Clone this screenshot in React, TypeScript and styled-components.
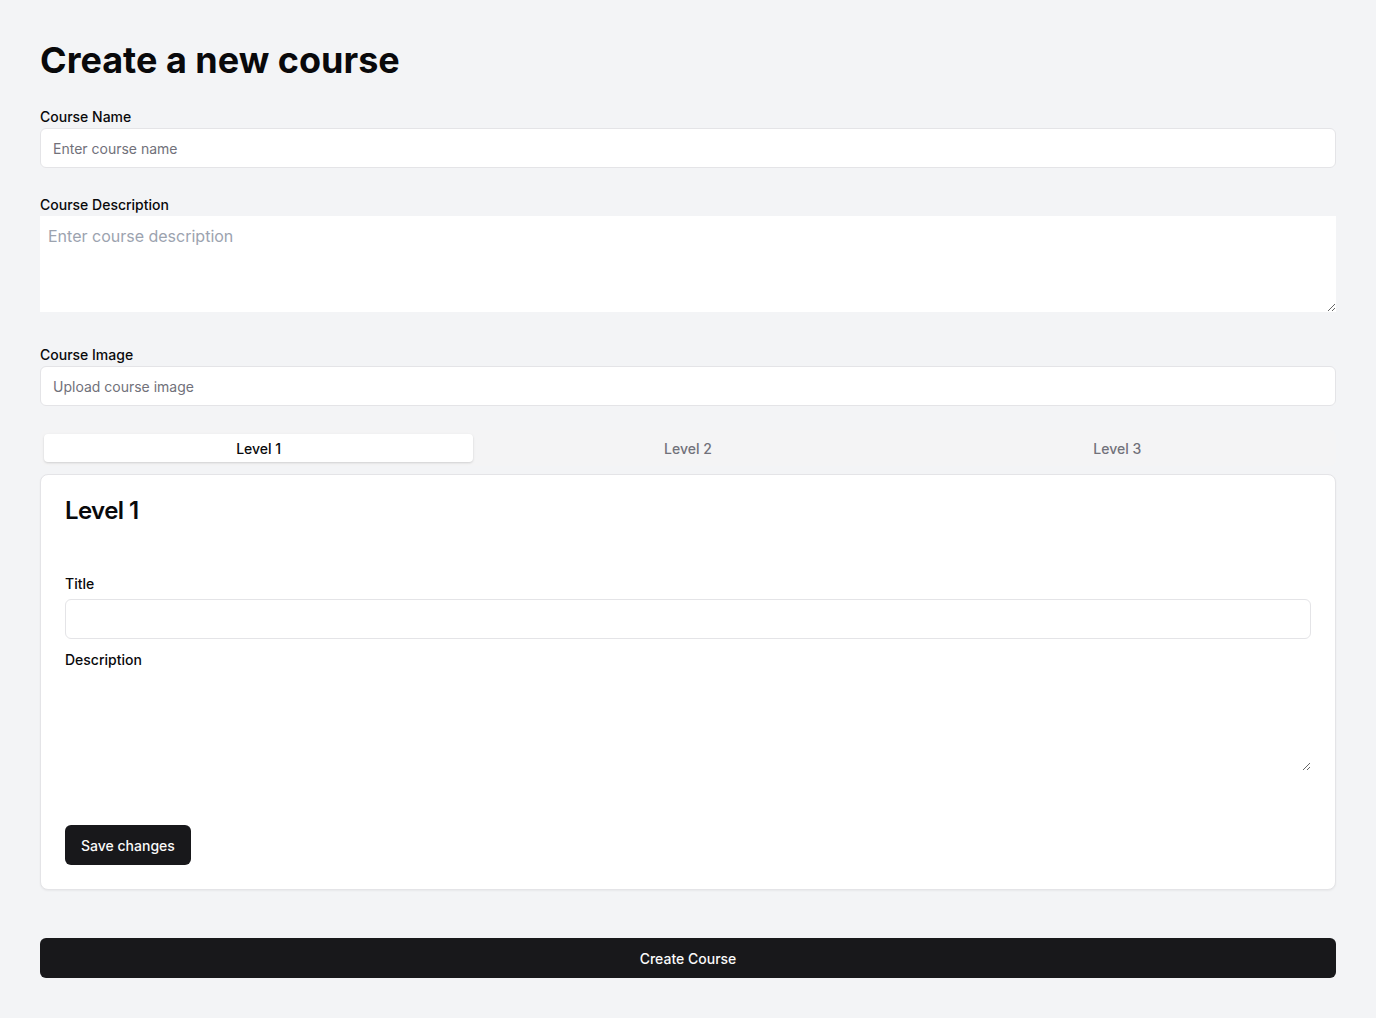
import { useState } from 'react';
import styled, { createGlobalStyle } from 'styled-components';

const levels = ['Level 1', 'Level 2', 'Level 3'];

export default function App() {
  const [active, setActive] = useState(0);

  return (
    <>
      <GlobalStyle />
      <Page>
        <Heading>Create a new course</Heading>

        <Field>
          <Label>Course Name</Label>
          <Input placeholder="Enter course name" />
        </Field>

        <Field>
          <Label>Course Description</Label>
          <PlainArea placeholder="Enter course description" />
        </Field>

        <Field>
          <Label>Course Image</Label>
          <Input placeholder="Upload course image" />
        </Field>

        <TabsList>
          {levels.map((l, i) => (
            <Tab key={l} $active={i === active} onClick={() => setActive(i)}>
              {l}
            </Tab>
          ))}
        </TabsList>

        <Card>
          <CardTitle>{levels[active]}</CardTitle>
          <CardBody>
            <Label $inCard>Title</Label>
            <Input />
            <Label $inCard $spaced>Description</Label>
            <PlainArea />
            <Button>Save changes</Button>
          </CardBody>
        </Card>

        <WideButton>Create Course</WideButton>
      </Page>
    </>
  );
}

const GlobalStyle = createGlobalStyle`
  * { box-sizing: border-box; }
  body {
    margin: 0;
    background: #f3f4f6;
    color: #09090b;
    font-family: Inter, "Noto Sans", sans-serif;
  }
`;

const Page = styled.main`
  padding: 40px;
  display: flex;
  flex-direction: column;
`;

const Heading = styled.h1`
  font-size: 36px;
  line-height: 40px;
  font-weight: 700;
  margin: 0 0 27px;
`;

const Field = styled.div`
  display: flex;
  flex-direction: column;
  margin-bottom: 27px;
`;

const Label = styled.label<{ $spaced?: boolean; $inCard?: boolean }>`
  display: block;
  font-size: 14px;
  line-height: 20px;
  font-weight: 500;
  margin-top: ${(p) => (p.$spaced ? '11px' : '0')};
  margin-bottom: ${(p) => (p.$inCard ? '5px' : '1px')};
`;

const Input = styled.input`
  width: 100%;
  height: 40px;
  padding: 8px 12px;
  border: 1px solid #e4e4e7;
  border-radius: 6px;
  background: #fff;
  font-family: inherit;
  font-size: 14px;
  color: #09090b;
  outline: none;

  &::placeholder {
    color: #71717a;
  }
`;

const PlainArea = styled.textarea`
  display: block;
  width: 100%;
  height: 96px;
  margin-bottom: 6px;
  padding: 10px 8px 8px;
  border: none;
  background: #fff;
  font-family: inherit;
  font-size: 16px;
  outline: none;

  &::placeholder {
    color: #9ca3af;
  }
`;

const TabsList = styled.div`
  display: grid;
  grid-template-columns: repeat(3, 1fr);
  height: 36px;
  padding: 4px;
  border-radius: 6px;
  background: #f4f4f5;
  margin-top: -3px;
`;

const Tab = styled.button<{ $active: boolean }>`
  border: none;
  border-radius: 4px;
  font-family: inherit;
  font-size: 14px;
  font-weight: 500;
  cursor: pointer;
  background: ${(p) => (p.$active ? '#fff' : 'transparent')};
  color: ${(p) => (p.$active ? '#09090b' : '#71717a')};
  box-shadow: ${(p) => (p.$active ? '0 1px 3px rgba(0,0,0,0.1), 0 1px 2px rgba(0,0,0,0.06)' : 'none')};
`;

const Card = styled.section`
  margin-top: 8px;
  background: #fff;
  border: 1px solid #e4e4e7;
  border-radius: 8px;
  box-shadow: 0 1px 2px rgba(0, 0, 0, 0.05);
  padding: 24px;
`;

const CardTitle = styled.h3`
  margin: 0;
  font-size: 24px;
  line-height: 24px;
  font-weight: 600;
  letter-spacing: -0.025em;
`;

const CardBody = styled.div`
  margin-top: 51px;
  display: flex;
  flex-direction: column;
`;

const Button = styled.button`
  align-self: flex-start;
  margin-top: 48px;
  height: 40px;
  padding: 0 16px;
  border: none;
  border-radius: 6px;
  background: #18181b;
  color: #fafafa;
  font-family: inherit;
  font-size: 14px;
  font-weight: 500;
  cursor: pointer;
`;

const WideButton = styled(Button)`
  align-self: stretch;
  margin-top: 48px;
`;
